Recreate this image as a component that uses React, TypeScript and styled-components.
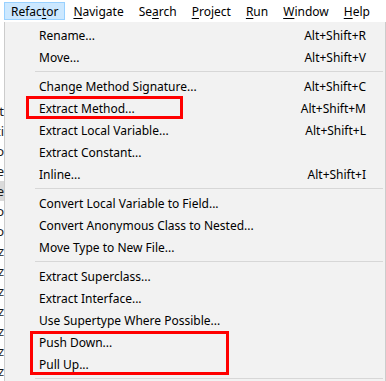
import React from 'react'
import styled, { createGlobalStyle } from 'styled-components'

const GlobalStyle = createGlobalStyle`
  html, body {
    margin: 0;
    padding: 0;
    background: #ffffff;
  }
  body {
    width: 386px;
    height: 381px;
    overflow: hidden;
    font-family: "Noto Sans", "Open Sans", sans-serif;
    font-size: 12px;
    color: #000;
  }
`

const Screen = styled.div`
  position: relative;
  width: 386px;
  height: 381px;
  overflow: hidden;
`

const MenuBar = styled.div`
  display: flex;
  align-items: center;
  height: 22px;
  padding-left: 4px;
  background: #ffffff;
`

const MenuTitle = styled.div<{ $open?: boolean }>`
  height: 18px;
  line-height: 17px;
  padding: 0 6px;
  margin-right: 1px;
  border: 1px solid ${p => (p.$open ? '#99d1ff' : 'transparent')};
  background: ${p => (p.$open ? '#cce8ff' : 'transparent')};
  box-sizing: border-box;
  white-space: nowrap;
  u {
    text-decoration-thickness: 1px;
    text-underline-offset: 2px;
  }
`

const Body = styled.div`
  display: flex;
  height: 359px;
`

const EditorStrip = styled.div`
  width: 4px;
  flex-shrink: 0;
  display: flex;
  flex-direction: column;
  padding-top: 32px;
  overflow: hidden;
`

const TabRule = styled.div`
  height: 1px;
  background: #404040;
  margin-bottom: 47px;
`

const CodeLine = styled.div<{ $current?: boolean }>`
  height: 20px;
  line-height: 20px;
  display: flex;
  justify-content: flex-end;
  background: ${p => (p.$current ? '#dadada' : 'transparent')};
  font-size: 13px;
  color: #1a1a1a;
  white-space: nowrap;
`

const Dropdown = styled.div`
  flex: 1;
  background: #f2f2f2;
  border-left: 1px solid #cccccc;
  border-right: 1px solid #cccccc;
  padding: 2px 0 0 0;
  box-sizing: border-box;
`

const Item = styled.div`
  display: flex;
  align-items: center;
  justify-content: space-between;
  height: 22px;
  padding: 0 19px 0 34px;
  white-space: nowrap;
`

const Shortcut = styled.span`
  color: #000;
`

const Separator = styled.div`
  height: 7px;
  display: flex;
  align-items: center;
  padding: 0 2px 0 30px;
  &::after {
    content: '';
    flex: 1;
    height: 1px;
    background: #d7d7d7;
  }
`

const Highlight = styled.div<{ $x: number; $y: number; $w: number; $h: number }>`
  position: absolute;
  left: ${p => p.$x}px;
  top: ${p => p.$y}px;
  width: ${p => p.$w}px;
  height: ${p => p.$h}px;
  border: 3px solid #ff0000;
  box-sizing: border-box;
  pointer-events: none;
`

type Entry = { label: string; key?: string } | 'sep'

const entries: Entry[] = [
  { label: 'Rename...', key: 'Alt+Shift+R' },
  { label: 'Move...', key: 'Alt+Shift+V' },
  'sep',
  { label: 'Change Method Signature...', key: 'Alt+Shift+C' },
  { label: 'Extract Method...', key: 'Alt+Shift+M' },
  { label: 'Extract Local Variable...', key: 'Alt+Shift+L' },
  { label: 'Extract Constant...' },
  { label: 'Inline...', key: 'Alt+Shift+I' },
  'sep',
  { label: 'Convert Local Variable to Field...' },
  { label: 'Convert Anonymous Class to Nested...' },
  { label: 'Move Type to New File...' },
  'sep',
  { label: 'Extract Superclass...' },
  { label: 'Extract Interface...' },
  { label: 'Use Supertype Where Possible...' },
  { label: 'Push Down...' },
  { label: 'Pull Up...' },
  'sep',
]

const codeTails = ['t', 'ti', 'o', 'e', 'e', 'o', 'o', 'z', 'z', 'z', 'z', 'z', 'z', 'z']

const App = () => {
  return (
    <Screen>
      <GlobalStyle />
      <MenuBar>
        <MenuTitle $open>Refac<u>t</u>or</MenuTitle>
        <MenuTitle><u>N</u>avigate</MenuTitle>
        <MenuTitle>Se<u>a</u>rch</MenuTitle>
        <MenuTitle><u>P</u>roject</MenuTitle>
        <MenuTitle><u>R</u>un</MenuTitle>
        <MenuTitle><u>W</u>indow</MenuTitle>
        <MenuTitle><u>H</u>elp</MenuTitle>
      </MenuBar>
      <Body>
        <EditorStrip>
          <TabRule />
          {codeTails.map((c, i) => (
            <CodeLine key={i} $current={i === 4}>{c}</CodeLine>
          ))}
        </EditorStrip>
        <Dropdown>
          {entries.map((e, i) =>
            e === 'sep' ? (
              <Separator key={i} />
            ) : (
              <Item key={i}>
                <span>{e.label}</span>
                {e.key && <Shortcut>{e.key}</Shortcut>}
              </Item>
            )
          )}
        </Dropdown>
      </Body>
      <Highlight $x={26} $y={96} $w={157} $h={23} />
      <Highlight $x={30} $y={331} $w={199} $h={44} />
    </Screen>
  )
}

export default App
